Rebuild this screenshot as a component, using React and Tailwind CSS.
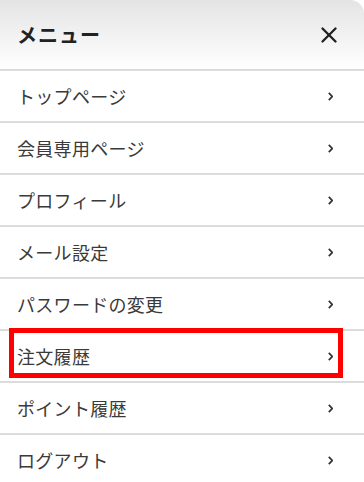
import { X } from "lucide-react";

const items = [
  "トップページ",
  "会員専用ページ",
  "プロフィール",
  "メール設定",
  "パスワードの変更",
  "注文履歴",
  "ポイント履歴",
  "ログアウト",
];

export default function App() {
  return (
    <div
      className="w-[364px] h-[482px] bg-white overflow-hidden text-[#3a3a3a]"
      style={{ fontFamily: '"Noto Sans CJK JP", "Noto Sans", sans-serif' }}
    >
      <div className="h-[71px] flex items-center justify-between pl-[17px] pr-[22px] rounded-tr-[14px] bg-gradient-to-b from-[#e4e4e4] to-white border-b-2 border-[#dcdcdc]">
        <span className="text-[20px] font-bold tracking-[1px] text-[#222]">メニュー</span>
        <X size={26} strokeWidth={2.2} className="text-[#222]" />
      </div>
      <ul>
        {items.map((label) => (
          <li
            key={label}
            className="relative h-[52px] flex items-center justify-between pl-[17px] pr-[31px] border-b-2 border-[#dcdcdc]"
          >
            <span className="text-[18px] leading-none tracking-[0.3px]">{label}</span>
            <svg width="5" height="9" viewBox="0 0 5 9" className="text-[#333]">
              <path d="M0.8 0.8l3.4 3.7-3.4 3.7" fill="none" stroke="currentColor" strokeWidth="1.7" />
            </svg>
            {label === "注文履歴" && (
              <div className="absolute left-[9px] right-[21px] top-[-3px] bottom-[3px] border-[5px] border-[#ff0000]" />
            )}
          </li>
        ))}
      </ul>
    </div>
  );
}
